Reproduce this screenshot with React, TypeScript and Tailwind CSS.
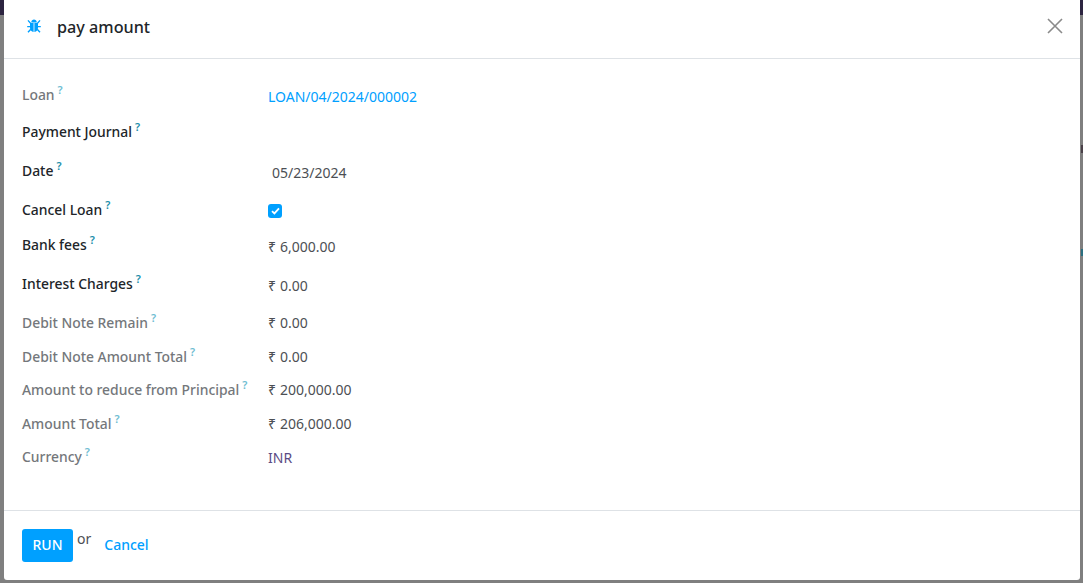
import React from "react";

type RowProps = {
  label: string;
  strong?: boolean;
  height: string;
  valueOffset?: string;
  children?: React.ReactNode;
};

const Row: React.FC<RowProps> = ({ label, strong, height, valueOffset = "", children }) => (
  <div className={`flex items-start ${height}`}>
    <div className="w-[246px] shrink-0 flex items-start">
      <span className={strong ? "text-[13.9px] font-medium text-[#212529]" : "text-[13.9px] font-medium text-[#74777b]"}>{label}</span>
      <span className={strong ? "ml-[3px] mt-[-1px] text-[11px] leading-[14px] font-semibold text-[#1b8eaa]" : "ml-[3px] mt-[-1px] text-[11px] leading-[14px] font-semibold text-[#6fbdd2]"}>?</span>
    </div>
    <div className={valueOffset}>{children}</div>
  </div>
);

const Amount = ({ value }: { value: string }) => (
  <span className="text-[#4c4f54]">
    ₹<span className="ml-[4px]">{value}</span>
  </span>
);

// font-awesome style bug, the package one has different legs
const BugIcon = () => (
  <svg width="14" height="14" viewBox="0 0 14 14" fill="#00a0ff" stroke="none">
    <path d="M4.2 3.4C4.4 1.4 5.6.6 7 .6s2.6.8 2.8 2.8z" />
    <path d="M3 4h3.6v9C4.4 12.8 2.8 10.8 3 8.6zM7.4 4H11v4.6c.2 2.2-1.4 4.2-3.6 4.4z" />
    <path d="M1 1.4l2.6 3M13 1.4l-2.6 3M.2 7.6h3.2M13.8 7.6h-3.2M1 13.2l2.8-3M13 13.2l-2.8-3" fill="none" stroke="#00a0ff" strokeWidth="1.4" />
  </svg>
);

export default function App() {
  return (
    <div className="relative h-[583px] w-[1083px] overflow-hidden bg-[#7f7f7f] font-['Noto_Sans',sans-serif] text-[14px] leading-[21px]">
      {/* backdrop bits peeking out round the dialog */}
      <div className="absolute left-0 top-0 h-[15px] w-full bg-[#2c2440]" />
      <div className="absolute right-0 top-[145px] h-[8px] w-[2px] bg-[#4a4048]" />
      <div className="absolute right-0 top-[249px] h-[7px] w-[2px] bg-[#2a6f80]" />

      <div className="absolute left-[4px] top-0 flex h-[580px] w-[1076px] flex-col rounded-b-[3px] bg-white">
        <header className="flex h-[59px] shrink-0 items-center border-b border-[#dee2e6] pl-[23px] pr-[17px]">
          <div className="mt-[-6px]">
            <BugIcon />
          </div>
          <h4 className="ml-[16px] mt-[-5px] text-[16.2px] font-medium leading-[24px] text-[#212529]">pay amount</h4>
          <button className="ml-auto mt-[-7px] text-[#8a8a8a]">
            <svg width="16" height="16" viewBox="0 0 16 16" fill="none" stroke="currentColor" strokeWidth="1.6">
              <path d="M1 1 15 15M15 1 1 15" />
            </svg>
          </button>
        </header>

        <div className="flex-1 pl-[18px] pt-[25px]">
          <Row label="Loan" height="h-[37px]" valueOffset="mt-[2px]">
            <span className="text-[#00a0ff]">LOAN/04/2024/000002</span>
          </Row>
          <Row label="Payment Journal" strong height="h-[39px]" />
          <Row label="Date" strong height="h-[39px]" valueOffset="mt-[2px] ml-[4px]">
            <span className="text-[#4c4f54]">05/23/2024</span>
          </Row>
          <Row label="Cancel Loan" strong height="h-[35px]" valueOffset="mt-[5px]">
            <span className="flex h-[14px] w-[14px] items-center justify-center rounded-[3px] bg-[#00a0ff]">
              <svg width="9" height="8" viewBox="0 0 9 8" fill="none" stroke="white" strokeWidth="1.8">
                <path d="M1 4.2 3.4 6.4 8 1.4" />
              </svg>
            </span>
          </Row>
          <Row label="Bank fees" strong height="h-[39px]" valueOffset="mt-[2px]">
            <Amount value="6,000.00" />
          </Row>
          <Row label="Interest Charges" strong height="h-[39px]" valueOffset="mt-[2px]">
            <Amount value="0.00" />
          </Row>
          <Row label="Debit Note Remain" height="h-[34px]">
            <Amount value="0.00" />
          </Row>
          <Row label="Debit Note Amount Total" height="h-[33px]">
            <Amount value="0.00" />
          </Row>
          <Row label="Amount to reduce from Principal" height="h-[34px]">
            <Amount value="200,000.00" />
          </Row>
          <Row label="Amount Total" height="h-[33px]">
            <Amount value="206,000.00" />
          </Row>
          <Row label="Currency" height="h-[33px]" valueOffset="mt-[1px]">
            <span className="text-[#5b4b85]">INR</span>
          </Row>
        </div>

        <footer className="flex h-[70px] shrink-0 items-start border-t border-[#dee2e6] pl-[18px] pt-[18px]">
          <button className="h-[33px] w-[51px] rounded-[3px] bg-[#00a0ff] pb-[2px] font-medium text-white">RUN</button>
          <span className="ml-[4px] mt-[-1px] text-[#4c4f54]">or</span>
          <a className="ml-[13px] mt-[5px] font-medium text-[#00a0ff]">Cancel</a>
        </footer>
      </div>
    </div>
  );
}
